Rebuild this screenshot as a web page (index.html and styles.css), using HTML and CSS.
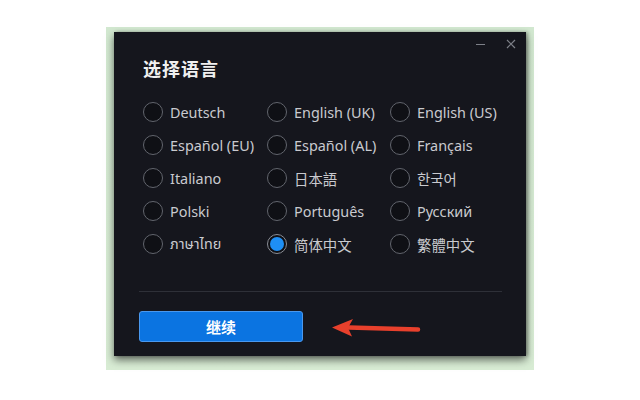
FILE: index.html
```html
<!DOCTYPE html>
<html>
<head>
<meta charset="utf-8">
<link rel="stylesheet" href="styles.css">
</head>
<body>
<div class="frame">
  <div class="dialog">
    <div class="winctl">
      <span class="min"></span>
      <svg class="close" width="10" height="10" viewBox="0 0 10 10"><path d="M1 1L9 9M9 1L1 9" stroke="#7d8088" stroke-width="1.2"/></svg>
    </div>
    <h1 class="title">选择语言</h1>
    <div class="grid">
      <label class="opt"><span class="radio"></span>Deutsch</label>
      <label class="opt"><span class="radio"></span>English (UK)</label>
      <label class="opt"><span class="radio"></span>English (US)</label>
      <label class="opt"><span class="radio"></span>Español (EU)</label>
      <label class="opt"><span class="radio"></span>Español (AL)</label>
      <label class="opt"><span class="radio"></span>Français</label>
      <label class="opt"><span class="radio"></span>Italiano</label>
      <label class="opt"><span class="radio"></span>日本語</label>
      <label class="opt"><span class="radio"></span>한국어</label>
      <label class="opt"><span class="radio"></span>Polski</label>
      <label class="opt"><span class="radio"></span>Português</label>
      <label class="opt"><span class="radio"></span>Русский</label>
      <label class="opt"><span class="radio"></span>ภาษาไทย</label>
      <label class="opt"><span class="radio on"></span>简体中文</label>
      <label class="opt"><span class="radio"></span>繁體中文</label>
    </div>
    <div class="divider"></div>
    <div class="footer">
      <button class="btn">继续</button>
      <svg class="arrow" width="92" height="22" viewBox="0 0 92 22"><path d="M87 12.5L18 10.5" stroke="#e8402c" stroke-width="4.5" stroke-linecap="round"/><path d="M1 10.5L22 2L17 10.7L21 19.5Z" fill="#e8402c"/></svg>
    </div>
  </div>
</div>
</body>
</html>
```
FILE: styles.css
```css
html, body { margin: 0; padding: 0; background: #ffffff; }
body { width: 640px; height: 400px; position: relative; font-family: "Noto Sans", "Open Sans", "Noto Sans CJK SC", sans-serif; }
.frame {
  position: absolute; left: 106px; top: 27px; width: 428px; height: 343px;
  background: linear-gradient(#d2e8d0, #d8ecd4);
  box-sizing: border-box; padding: 5px 8px 0 8px;
}
.dialog {
  width: 412px; height: 324px; background: #15161d; position: relative;
  box-sizing: border-box; padding: 20px 25px 0 25px;
  box-shadow: 0 4px 8px rgba(0,0,0,0.55), 2px 0 3px rgba(0,0,0,0.25);
}
.winctl { position: absolute; top: 8px; right: 10px; display: flex; align-items: center; gap: 21px; height: 8px; }
.min { width: 9px; height: 1px; background: #7d8088; display: block; }
.close { display: block; }
.title {
  margin: 4px 0 0 4px; font-family: "Noto Sans CJK SC", sans-serif; font-weight: 700;
  font-size: 18px; color: #f0f0f0; line-height: 24px; letter-spacing: 1px;
}
.grid {
  display: grid; grid-template-columns: 124px 123px 120px; row-gap: 11px;
  margin-top: 21px; margin-left: 4px;
}
.opt { display: flex; align-items: center; gap: 7px; height: 22px; font-size: 14.4px; color: #c9cacf; white-space: nowrap; font-family: "Noto Sans", "Noto Sans CJK SC", "Noto Sans CJK KR", "Noto Sans Thai", sans-serif; }
.radio {
  width: 20px; height: 20px; border-radius: 50%; border: 1px solid #62656d; box-sizing: border-box;
  background: #0f1015; flex: none; position: relative;
}
.radio.on { border-color: #8a8d95; }
.radio.on::after {
  content: ""; position: absolute; left: 2px; top: 2px; width: 14px; height: 14px; border-radius: 50%;
  background: #1e8ff5;
}
.divider { height: 1px; background: #2e3038; margin: 36px -1px 0 0; }
.footer { display: flex; align-items: center; margin-top: 19px; margin-left: 0; }
.btn {
  width: 164px; height: 31px; background: #0b74e1; border: 1px solid #4a98ee; border-radius: 3px;
  color: #ffffff; font-family: "Noto Sans CJK SC", sans-serif; font-weight: 700; font-size: 15px;
  padding: 0; line-height: 28px;
}
.arrow { margin-left: 28px; margin-top: 2px; }
```
